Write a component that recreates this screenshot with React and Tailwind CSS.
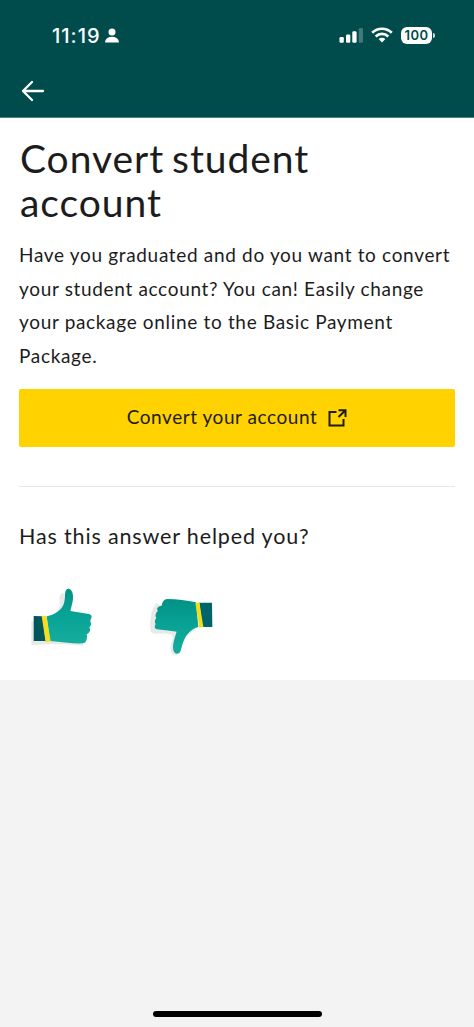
import React from 'react';

const StatusBar = () => (
  <div className="flex h-[70px] items-center justify-between pl-[52px] pr-[39px] text-white">
    <div className="flex items-center gap-[4px] pt-px">
      <span className="font-['Inter',sans-serif] text-[20px] font-medium leading-[24px] tracking-[1px]">11:19</span>
      <svg className="h-[15px] w-[14px]" viewBox="0 0 14 15" fill="currentColor">
        <circle cx="7" cy="3.9" r="3.5" />
        <path d="M0.3 14.4c-.3 0-.3-.5-.2-1C.7 10.400 3.300 8.700 7 8.700s6.300 1.700 6.900 4.700c.1.500.1 1-.2 1z" />
      </svg>
    </div>
    <div className="flex items-center">
      <svg className="h-[16px] w-[24px]" viewBox="0 0 24 16" fill="currentColor">
        <rect x="0.500" y="10" width="4.300" height="5.800" rx="1.200" />
        <rect x="7" y="7.500" width="4.300" height="8.300" rx="1.200" />
        <rect x="13.300" y="4.200" width="4.300" height="11.600" rx="1.200" />
        <rect x="19.700" y="1" width="4.300" height="14.800" rx="1.200" opacity="0.25" />
      </svg>
      <svg className="ml-[8px] h-[16px] w-[22px]" viewBox="0 0 22 16" fill="none" stroke="currentColor" strokeWidth="2.700">
        <path d="M1.200 5.800C6.800 0.400 15.200 0.400 20.800 5.800" />
        <path d="M4.700 9.500C8.300 6 13.700 6 17.300 9.500" />
        <path d="M7.600 12.100c2-1.900 4.800-1.900 6.800 0L11 15.400z" fill="currentColor" stroke="none" />
      </svg>
      <div className="ml-[8px] flex h-[17px] w-[31px] items-center justify-center rounded-[6px] bg-white font-['Inter',sans-serif] text-[13px] font-semibold leading-none tracking-[0.5px] text-[#004c4c]">
        100
      </div>
      <div className="ml-px h-[5px] w-[2px] rounded-r-full bg-white/80" />
    </div>
  </div>
);

const Thumb = ({ id }) => (
  <svg className="h-[90px] w-[90px]" viewBox="0 0 270 270">
    <defs>
      <linearGradient id={id} x1="0" y1="0" x2="0" y2="1">
        <stop offset="0" stopColor="#009286" />
        <stop offset="0.55" stopColor="#0aa597" />
        <stop offset="1" stopColor="#14ac9d" />
      </linearGradient>
    </defs>
    {id === 'up' ? (
      <>
        <path
          d="M34 139L72 139C95 125 116 111 119 92C121 76 114 61 126 55C150 50 145 94 141 111L190 121L198 180L188 212C145 209 110 206 84 208L34 211Z"
          fill="#e8e9e9"
        />
        <path
          d="M80 124C106 119 129 102 133 80C137 64 133 51 139 44C148 35 159 48 159 63C160 78 155 92 151 108L207 117C215 119 217 125 213 131C212 134 212 137 210 139C216 144 213 153 208 157C213 164 209 175 200 178C203 190 199 205 188 205C157 206 125 201 90 198Z"
          fill="url(#up)"
        />
        <path d="M41 123L68 124L77 198L41 198Z" fill="#00565a" />
        <path d="M65 123L79 122L92 199L77 201Z" fill="#f3df20" />
      </>
    ) : (
      <>
        <path
          d="M48 83L35 110L30 145L31 165C34 182 60 175 92 178L100 190C88 210 88 240 107 241C119 239 117 207 133 190L167 161Z"
          fill="#e8e9e9"
        />
        <path
          d="M168 82L175 156C156 160 139 177 130 200C123 218 124 234 113 236C101 237 97 222 100 206C102 193 106 183 110 170C88 167 64 165 51 163C43 161 43 153 47 147C43 143 44 135 49 129C44 122 48 112 54 108C48 101 53 93 65 92C67 82 70 73 82 72C112 72 139 77 168 82Z"
          fill="url(#down)"
        />
        <path d="M178 83L216 83L217 156L187 156Z" fill="#00656a" />
        <path d="M166 84L178 82L190 156L178 158Z" fill="#f0de1c" />
      </>
    )}
  </svg>
);

const App = () => (
  <div className="flex min-h-[1027px] w-full flex-col bg-[#f3f3f3] font-['Lato',sans-serif] text-[#1c1c1c]">
    <header className="h-[118px] border-b border-[#4d8080] bg-[#004c4c]">
      <StatusBar />
      <button type="button" aria-label="Back" className="ml-[21px] mt-[10px] block text-white">
        <svg className="h-[22px] w-[24px]" viewBox="0 0 24 22" fill="none" stroke="currentColor" strokeWidth="2.300" strokeLinecap="round" strokeLinejoin="round">
          <path d="M22 11H2M11 2L2 11l9 9" />
        </svg>
      </button>
    </header>

    <main className="h-[562px] bg-white px-[19px] pt-[18px]">
      <h1 className="whitespace-nowrap pl-px text-[39px] leading-[44px] tracking-[0.95px] [word-spacing:-3px]">
        Convert student
        <br />
        account
      </h1>
      <p className="mt-[14px] whitespace-nowrap text-[19px] leading-[33.500px] tracking-[0.67px]">
        Have you graduated and do you want to convert
        <br />
        your student account? You can! Easily change
        <br />
        your package online to the Basic Payment
        <br />
        Package.
      </p>
      <button type="button" className="mt-[17px] flex h-[58px] w-[436px] items-center justify-center gap-[11px] rounded-[2px] bg-[#ffd200] pb-px">
        <span className="whitespace-nowrap text-[19px] tracking-[0.55px]">Convert your account</span>
        <svg className="mt-px h-[18px] w-[19px]" viewBox="0 0 19 18" fill="none" stroke="currentColor" strokeWidth="2">
          <path d="M8.500 3H1.500v13.500H15.500V10M10.500 1.200H17.500V8M17.500 1.200L10.500 8" />
        </svg>
      </button>
      <hr className="mt-[39px] w-[436px] border-[#e6e6e6]" />
      <h2 className="mt-[35px] whitespace-nowrap text-[21.500px] leading-[28px] tracking-[0.85px]">Has this answer helped you?</h2>
      <div className="ml-px mt-[25px] flex gap-[30px]">
        <Thumb id="up" />
        <Thumb id="down" />
      </div>
    </main>

    <footer className="flex flex-1 items-end justify-center pb-[10px]">
      <div className="h-[6px] w-[169px] rounded-full bg-black" />
    </footer>
  </div>
);

export default App;
